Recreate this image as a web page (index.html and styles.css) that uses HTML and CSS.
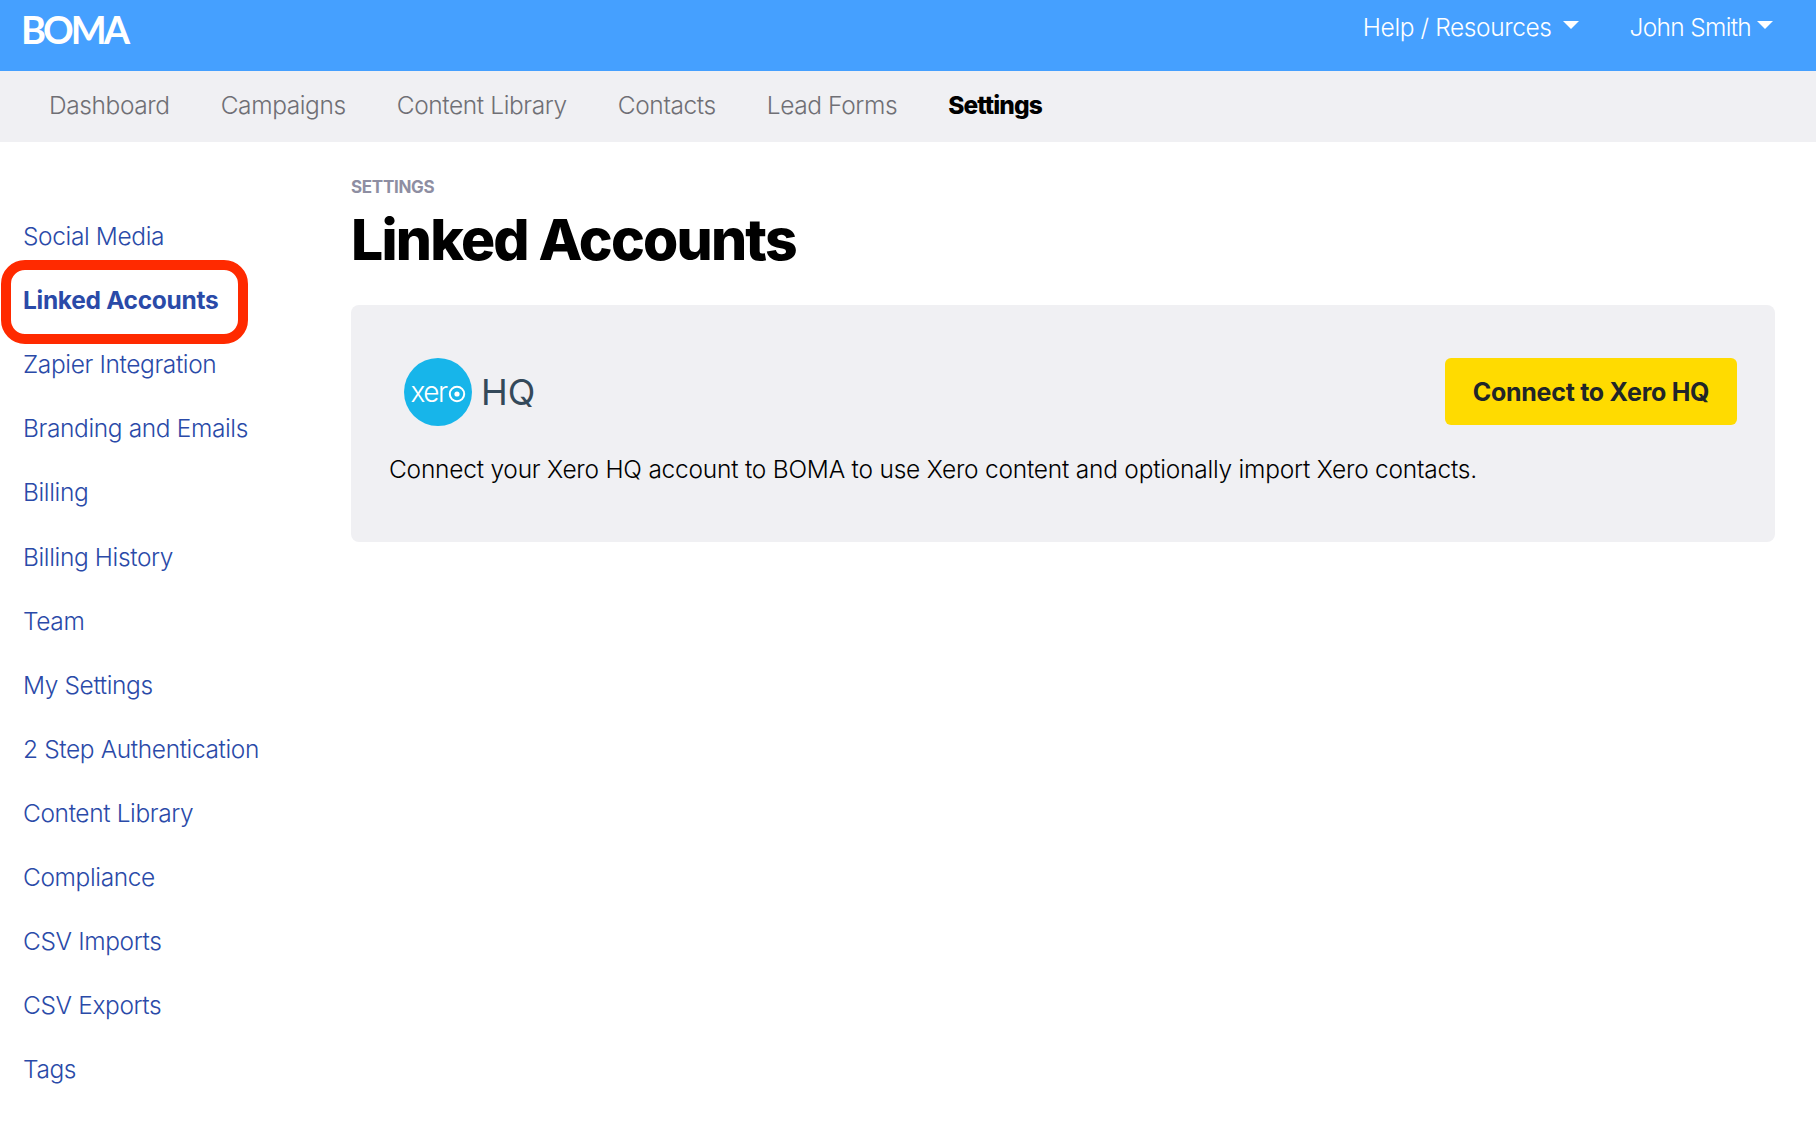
FILE: index.html
```html
<!DOCTYPE html>
<html lang="en">
<head>
<meta charset="utf-8">
<title>Linked Accounts</title>
<link rel="stylesheet" href="styles.css">
</head>
<body>
<header class="topbar">
  <a class="brand" href="#">BOMA</a>
  <nav class="topnav">
    <a class="toplink help" href="#">Help / Resources<span class="caret"></span></a>
    <a class="toplink user" href="#">John Smith<span class="caret"></span></a>
  </nav>
</header>
<nav class="subnav">
  <a href="#">Dashboard</a>
  <a href="#">Campaigns</a>
  <a href="#">Content Library</a>
  <a href="#">Contacts</a>
  <a href="#">Lead Forms</a>
  <a class="current" href="#">Settings</a>
</nav>
<div class="page">
  <aside class="sidebar">
    <a href="#">Social Media</a>
    <a class="active" href="#">Linked Accounts<span class="highlight"></span></a>
    <a href="#">Zapier Integration</a>
    <a href="#">Branding and Emails</a>
    <a href="#">Billing</a>
    <a href="#">Billing History</a>
    <a href="#">Team</a>
    <a href="#">My Settings</a>
    <a href="#">2 Step Authentication</a>
    <a href="#">Content Library</a>
    <a href="#">Compliance</a>
    <a href="#">CSV Imports</a>
    <a href="#">CSV Exports</a>
    <a href="#">Tags</a>
  </aside>
  <main class="content">
    <div class="eyebrow">SETTINGS</div>
    <h1>Linked Accounts</h1>
    <section class="card">
      <div class="card-head">
        <div class="logo">
          <span class="xero">xer<svg class="xero-o" viewBox="0 0 18 18" aria-hidden="true"><circle cx="9" cy="9" r="7.2" fill="none" stroke="#fff" stroke-width="2"/><circle cx="9" cy="9" r="2.6" fill="#fff"/></svg></span>
          <span class="hq">HQ</span>
        </div>
        <a class="btn" href="#">Connect to Xero HQ</a>
      </div>
      <p>Connect your Xero HQ account to BOMA to use Xero content and optionally import Xero contacts.</p>
    </section>
  </main>
</div>
</body>
</html>
```
FILE: styles.css
```css
* { box-sizing: border-box; }
html, body { margin: 0; padding: 0; }
body {
  font-family: "Inter", "Lato", sans-serif;
  background: #fff;
  color: #000;
  height: 1124px;
  overflow: hidden;
}
a { text-decoration: none; color: inherit; }

.topbar {
  height: 71px;
  background: #45a0ff;
  color: #fff;
  display: flex;
  justify-content: space-between;
  align-items: flex-start;
  padding: 0 43px 0 21px;
}
.brand {
  font-family: "Lato", sans-serif;
  font-size: 38px;
  font-weight: 700;
  line-height: 58px;
  letter-spacing: -3px;
}
.topnav { display: flex; gap: 51px; padding-top: 11px; }
.toplink {
  font-size: 24.5px;
  font-weight: 300;
  line-height: 32px;
  display: flex;
  align-items: center;
}
.help { letter-spacing: -0.4px; }
.user { letter-spacing: -0.7px; }
.caret {
  display: block;
  width: 0;
  height: 0;
  border-left: 8px solid transparent;
  border-right: 8px solid transparent;
  border-top: 8px solid #fff;
  margin-top: -4px;
}
.help .caret { margin-left: 11px; }
.user .caret { margin-left: 6px; }

.subnav {
  height: 71px;
  background: #f0f0f3;
  display: flex;
  align-items: center;
  gap: 51px;
  padding: 0 0 4px 49px;
  font-size: 24.5px;
  font-weight: 300;
  letter-spacing: -0.4px;
  color: #6f6f75;
}
.subnav .current { color: #000; font-weight: 800; letter-spacing: -0.9px; }

.page { display: grid; grid-template-columns: 351px 1fr; }
.sidebar {
  padding: 62px 0 0 23px;
  display: flex;
  flex-direction: column;
  font-size: 24.5px;
  font-weight: 300;
  letter-spacing: -0.38px;
  color: #2a4aa8;
}
.sidebar a {
  height: 64.1px;
  display: flex;
  align-items: center;
  position: relative;
  white-space: nowrap;
}
.sidebar .active { font-weight: 700; letter-spacing: -0.3px; }
.highlight {
  position: absolute;
  left: -22px;
  top: -8px;
  width: 247px;
  height: 84px;
  border: 10px solid #ff2a00;
  border-radius: 24px;
}

.content { padding: 34px 41px 0 0; }
.eyebrow {
  font-size: 17px;
  font-weight: 700;
  letter-spacing: -0.3px;
  color: #8e8ea2;
  line-height: 22px;
}
h1 {
  margin: 5px 0 0;
  font-size: 57px;
  font-weight: 800;
  letter-spacing: -1.8px;
  line-height: 74px;
}
.card {
  margin-top: 28px;
  height: 237px;
  background: #f0f0f3;
  border-radius: 8px;
  padding: 53px 38px 0;
}
.card-head {
  display: flex;
  justify-content: space-between;
  align-items: flex-start;
  padding-left: 15px;
}
.logo { display: flex; align-items: center; gap: 9px; }
.xero {
  width: 68px;
  height: 68px;
  border-radius: 50%;
  background: #17b5ea;
  color: #fff;
  font-size: 28px;
  font-weight: 300;
  letter-spacing: -1.5px;
  display: flex;
  align-items: center;
  justify-content: center;
}
.xero-o { width: 18px; height: 18px; margin: 3px 0 0 1px; }
.hq { font-size: 36px; font-weight: 400; color: #34495a; }
.btn {
  width: 292px;
  height: 67px;
  background: #ffdb00;
  border-radius: 6px;
  color: #212529;
  font-size: 25px;
  font-weight: 700;
  letter-spacing: -0.27px;
  display: flex;
  align-items: center;
  justify-content: center;
}
.card p {
  margin: 27px 0 0;
  font-size: 24.5px;
  font-weight: 300;
  letter-spacing: -0.23px;
  line-height: 32px;
  white-space: nowrap;
}
```
